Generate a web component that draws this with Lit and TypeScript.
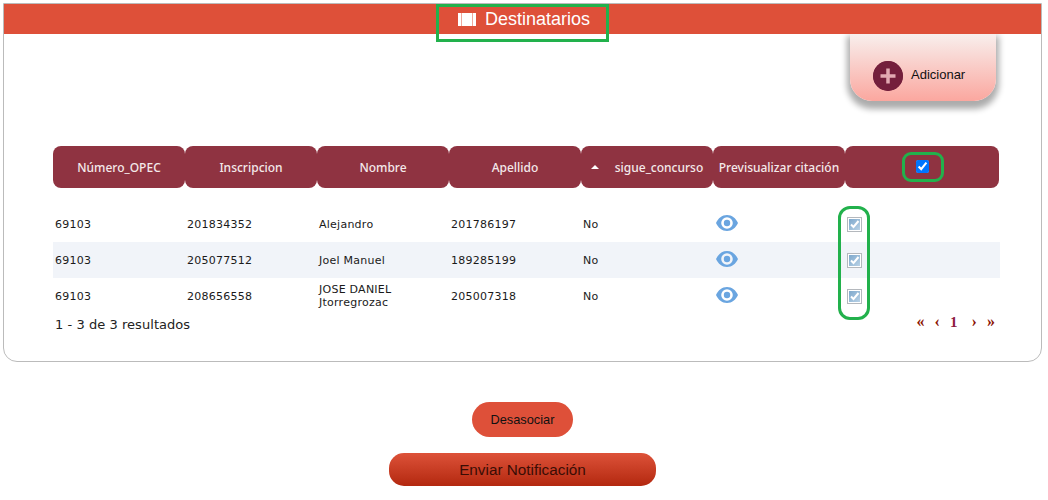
import { css, html, LitElement } from "lit";
import { customElement } from "lit/decorators.js";

const rows = [
  { opec: "69103", insc: "201834352", nombre: ["Alejandro"], apellido: "201786197", sigue: "No" },
  { opec: "69103", insc: "205077512", nombre: ["Joel Manuel"], apellido: "189285199", sigue: "No" },
  { opec: "69103", insc: "208656558", nombre: ["JOSE DANIEL", "Jtorregrozac"], apellido: "205007318", sigue: "No" },
];

const eye = html`<svg class="eye" width="22" height="16" viewBox="0 0 22 16">
  <path fill="#6aa5e0" fill-rule="evenodd" d="M11 0C6 0 2.300 3.200 0 8c2.300 4.800 6 8 11 8s8.700-3.200 11-8c-2.300-4.800-6-8-11-8zm0 2.200a5.800 5.800 0 1 1 0 11.600a5.800 5.800 0 0 1 0-11.600z"/>
  <circle cx="11" cy="8" r="3.200" fill="#6aa5e0"/>
</svg>`;

const oldCheck = html`<svg class="old-check" width="15" height="15" viewBox="0 0 15 15">
  <defs>
    <linearGradient id="chk" x1="0" y1="0" x2="1" y2="1">
      <stop offset="0" stop-color="#7ea8cc"/>
      <stop offset="1" stop-color="#b9d2e6"/>
    </linearGradient>
  </defs>
  <rect x="0.500" y="0.500" width="14" height="14" fill="#fff" stroke="#b4b8bd"/>
  <rect x="2" y="2" width="11" height="11" fill="url(#chk)"/>
  <path d="M4 7.500l2.500 2.500L11.500 4" fill="none" stroke="#fff" stroke-width="2"/>
</svg>`;

@customElement("app-root")
export class AppRoot extends LitElement {
  static styles = css`
    :host {
      display: block;
      position: relative;
      width: 1048px;
      height: 500px;
      background: #fff;
      overflow: hidden;
      font-family: "Liberation Sans", Arial, sans-serif;
    }
    .panel {
      box-sizing: border-box;
      width: 1039px;
      height: 359px;
      margin: 3px 0 0 3px;
      border: 1px solid #bbbbbb;
      border-radius: 0 0 14px 14px;
    }
    .bar {
      position: relative;
      z-index: 2;
      height: 30px;
      background: #de5039;
      color: #fff;
      display: flex;
      align-items: center;
      justify-content: center;
      gap: 9px;
      font-size: 18px;
      padding-left: 3px;
    }
    .tab-row {
      display: flex;
      justify-content: flex-end;
      padding-right: 45px;
    }
    .tab {
      width: 146px;
      height: 67px;
      box-sizing: border-box;
      padding: 27px 0 0 23px;
      border-radius: 0 0 22px 22px;
      background: linear-gradient(#f8efed, #fba79f);
      box-shadow: 0 5px 6px 3px rgba(0, 0, 0, 0.33);
      display: flex;
      align-items: flex-start;
      gap: 8px;
      font-size: 13px;
      color: #111;
    }
    .tab span {
      line-height: 28px;
    }
    .plus {
      width: 30px;
      height: 30px;
      border-radius: 50%;
      background: #741f3c;
      display: block;
    }
    .table {
      display: grid;
      grid-template-columns: repeat(6, 132px) 155px;
      margin: 45px 0 0 49px;
      width: 947px;
    }
    .th {
      height: 42px;
      background: #8f3341;
      border-radius: 8px;
      color: #f4e9ea;
      font-family: "Noto Sans", sans-serif;
      font-weight: 500;
      font-size: 12px;
      display: flex;
      align-items: center;
      justify-content: center;
      gap: 16px;
    }
    .th.last {
      width: 154px;
    }
    .th input {
      width: 13px;
      height: 13px;
      margin: 0 0 2px 0;
      accent-color: #0075ff;
    }
    .caret {
      width: 0;
      height: 0;
      border-left: 4px solid transparent;
      border-right: 4px solid transparent;
      border-bottom: 4px solid #fff;
    }
    .spacer {
      grid-column: 1 / -1;
      height: 18px;
    }
    .td {
      height: 36px;
      padding-left: 2px;
      box-sizing: border-box;
      display: flex;
      flex-direction: column;
      justify-content: center;
      align-items: flex-start;
      font-family: "DejaVu Sans", Verdana, sans-serif;
      font-size: 11px;
      letter-spacing: 0.25px;
      line-height: 13px;
      color: #1a1a1a;
    }
    .td.alt {
      background: #f1f4f9;
    }
    .eye {
      margin: -3px 0 0 1px;
    }
    .footer {
      display: flex;
      justify-content: space-between;
      margin: 0 46px 0 51px;
      font-family: "DejaVu Sans", Verdana, sans-serif;
      font-size: 13px;
      letter-spacing: 0.05px;
      color: #222;
      height: 20px;
      align-items: center;
    }
    .pager {
      display: flex;
      align-items: center;
      gap: 10px;
      margin-top: -4px;
      font-family: "Liberation Serif", serif;
      font-weight: 700;
      font-size: 16px;
      color: #8b1200;
    }
    .pager b {
      color: #8e1a3f;
      font-size: 15px;
      margin-right: 4px;
    }
    .actions {
      display: flex;
      flex-direction: column;
      align-items: center;
      padding: 40px 0 0 0;
      width: 1045px;
    }
    button {
      border: none;
      font-family: inherit;
      padding: 0;
      color: #111;
    }
    .unlink {
      width: 101px;
      height: 35px;
      border-radius: 18px;
      background: #de5039;
      font-size: 12.800px;
    }
    .send {
      margin-top: 16px;
      width: 267px;
      height: 33px;
      border-radius: 15px;
      background: linear-gradient(#dd5239, #b3280f);
      font-size: 15.300px;
      color: #3a0d05;
    }
    .mark {
      position: absolute;
      z-index: 3;
      box-sizing: border-box;
      border: 3px solid #22b14c;
    }
    .mark.title {
      left: 436px;
      top: 4px;
      width: 173px;
      height: 38px;
    }
    .mark.all {
      left: 902px;
      top: 152px;
      width: 42px;
      height: 30px;
      border-radius: 9px;
    }
    .mark.rows {
      left: 838px;
      top: 206px;
      width: 32px;
      height: 114px;
      border-radius: 12px;
    }
  `;

  render() {
    return html`
      <div class="panel">
        <div class="bar">
          <svg width="18" height="13" viewBox="0 0 18 13">
            <rect x="0" width="3.500" height="13" fill="#fff"/>
            <rect x="4" width="10" height="13" fill="#fff"/>
            <rect x="14.500" width="3.500" height="13" fill="#fff"/>
          </svg>
          <span>Destinatarios</span>
        </div>
        <div class="tab-row">
          <div class="tab">
            <svg class="plus" viewBox="0 0 30 30">
              <circle cx="15" cy="15" r="15" fill="#741f3c"/>
              <path d="M15 7.500v15M7.500 15h15" stroke="#e2aab2" stroke-width="3.500"/>
            </svg>
            <span>Adicionar</span>
          </div>
        </div>
        <div class="table">
          <div class="th">Número_OPEC</div>
          <div class="th">Inscripcion</div>
          <div class="th">Nombre</div>
          <div class="th">Apellido</div>
          <div class="th"><i class="caret"></i>sigue_concurso</div>
          <div class="th">Previsualizar citación</div>
          <div class="th last"><input type="checkbox" checked /></div>
          <div class="spacer"></div>
          ${rows.map((r, i) => {
            const alt = i % 2 === 1 ? "td alt" : "td";
            return html`
              <div class=${alt}>${r.opec}</div>
              <div class=${alt}>${r.insc}</div>
              <div class=${alt}>${r.nombre.map((n) => html`<div>${n}</div>`)}</div>
              <div class=${alt}>${r.apellido}</div>
              <div class=${alt}>${r.sigue}</div>
              <div class=${alt}>${eye}</div>
              <div class=${alt}>${oldCheck}</div>
            `;
          })}
        </div>
        <div class="footer">
          <span>1 - 3 de 3 resultados</span>
          <span class="pager">
            <span>«</span><span>‹</span><b>1</b><span>›</span><span>»</span>
          </span>
        </div>
      </div>
      <div class="actions">
        <button class="unlink">Desasociar</button>
        <button class="send">Enviar Notificación</button>
      </div>
      <div class="mark title"></div>
      <div class="mark all"></div>
      <div class="mark rows"></div>
    `;
  }
}
